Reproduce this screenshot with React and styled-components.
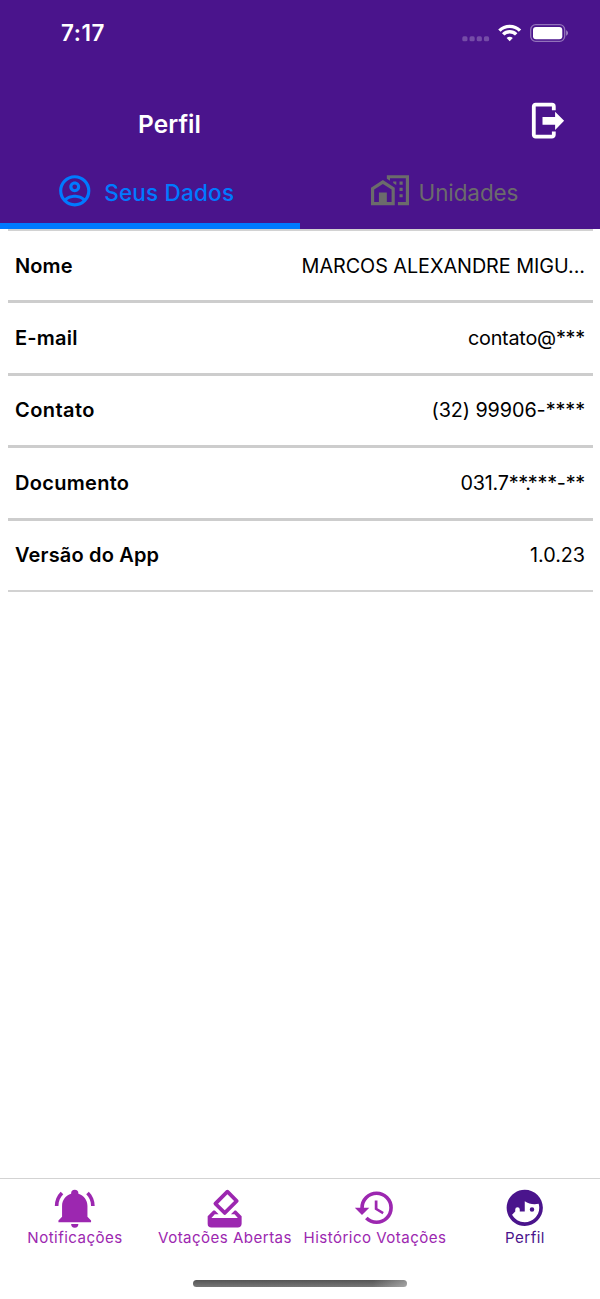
import React, { useState } from "react";
import styled, { createGlobalStyle } from "styled-components";

const GlobalStyle = createGlobalStyle`
  * {
    box-sizing: border-box;
  }

  body {
    margin: 0;
    background-color: #fff;
    font-family: Inter, "Liberation Sans", sans-serif;
  }
`;

const Root = styled.div`
  width: 600px;
  height: 1299px;
  background-color: #fff;
  display: flex;
  flex-direction: column;
  overflow: hidden;
`;

const Header = styled.header`
  height: 229px;
  background-color: #4a148c;
  color: #fff;
  display: flex;
  flex-direction: column;
`;

const StatusBar = styled.div`
  height: 66px;
  padding: 0 32px 0 61px;
  display: flex;
  align-items: center;
  justify-content: space-between;
`;

const Clock = styled.span`
  font-size: 22.4px;
  line-height: 28px;
  padding-bottom: 1px;
  font-weight: 600;
  letter-spacing: 0.6px;
`;

const StatusIcons = styled.div`
  display: flex;
  align-items: center;
`;

const TitleBar = styled.div`
  height: 94px;
  padding: 22px 34.7px 0 138px;
  display: flex;
  align-items: flex-start;
  justify-content: space-between;
`;

const Title = styled.h1`
  margin: 21px 0 0;
  font-size: 24.4px;
  line-height: 30px;
  font-weight: 600;
  letter-spacing: 0.1px;
`;

const LogoutButton = styled.button`
  padding: 0;
  margin-top: 13px;
  border: 0;
  background: none;
  color: #fff;
  cursor: pointer;
  line-height: 0;
`;

const Tabs = styled.div`
  flex: 1;
  display: flex;
`;

const Tab = styled.button`
  width: 300px;
  padding: ${props => props.$pad};
  border: 0;
  border-bottom: 6px solid ${props => (props.$active ? "#007aff" : "transparent")};
  background: none;
  color: ${props => (props.$active ? "#007aff" : "#6b6b6b")};
  display: flex;
  align-items: flex-start;
  gap: ${props => props.$gap};
  font-family: inherit;
  font-size: 22.5px;
  line-height: 30px;
  font-weight: ${props => (props.$active ? 500 : 400)};
  letter-spacing: ${props => props.$spacing};
  cursor: pointer;
  text-align: left;
`;

const TabText = styled.span`
  margin-top: 18px;
`;

const List = styled.div`
  flex: 1;
  padding: 0 7px 0 7.5px;
`;

const Line = styled.div`
  height: ${props => (props.$thin ? "2px" : "3px")};
  background-color: ${props => (props.$thin ? "#d2d2d2" : "#cdcdcd")};
`;

const Row = styled.div`
  height: 69.5px;
  padding: 0 8px 0 7.5px;
  display: flex;
  align-items: center;
  justify-content: space-between;
  color: #000;
  font-size: 19.8px;
  line-height: 24px;

  &:nth-child(2) {
    height: 69px;
  }
`;

const Label = styled.span`
  font-size: 20px;
  font-weight: 600;
  letter-spacing: ${props => props.$spacing};
`;

const Value = styled.span`
  letter-spacing: ${props => props.$spacing};
  font-feature-settings: "calt" 0;
  white-space: nowrap;
`;

// the dot of a masked document sits under the asterisks
const MaskDot = styled.span`
  margin: 0 -2.8px;
`;

const BottomBar = styled.nav`
  height: 121px;
  border-top: 1px solid #d3d3d3;
  display: flex;
  flex-direction: column;
  align-items: center;
`;

const NavItems = styled.div`
  width: 100%;
  height: 101px;
  display: grid;
  grid-template-columns: repeat(4, 150px);
`;

const NavItem = styled.button`
  padding: 6.5px 0 0;
  border: 0;
  background: none;
  color: ${props => (props.$active ? "#4a148c" : "#9c27b0")};
  display: flex;
  flex-direction: column;
  align-items: center;
  font-family: inherit;
  font-size: 15.1px;
  line-height: 18px;
  letter-spacing: 0.45px;
  white-space: nowrap;
  cursor: pointer;
`;

const HomeIndicator = styled.div`
  width: 214px;
  height: 7px;
  border-radius: 4px;
  background:
    linear-gradient(to right, transparent 84%, rgba(255, 255, 255, 0.35)),
    linear-gradient(to bottom, #555, #777);
`;

const paths = {
  account: "M12,2A10,10 0 0,0 2,12A10,10 0 0,0 12,22A10,10 0 0,0 22,12A10,10 0 0,0 12,2M7.07,18.28C7.5,17.38 10.12,16.5 12,16.5C13.88,16.5 16.5,17.38 16.93,18.28C15.57,19.36 13.86,20 12,20C10.14,20 8.43,19.36 7.07,18.28M18.36,16.83C16.93,15.09 13.46,14.5 12,14.5C10.54,14.5 7.07,15.09 5.64,16.83C4.62,15.5 4,13.82 4,12C4,7.59 7.59,4 12,4C16.41,4 20,7.59 20,12C20,13.82 19.38,15.5 18.36,16.83M12,6C10.06,6 8.5,7.56 8.5,9.5C8.5,11.44 10.06,13 12,13C13.94,13 15.5,11.44 15.5,9.5C15.5,7.56 13.94,6 12,6M12,11A1.5,1.5 0 0,1 10.5,9.5A1.5,1.5 0 0,1 12,8A1.5,1.5 0 0,1 13.5,9.5A1.5,1.5 0 0,1 12,11Z",
  homeCity: "M10 2V4.26L12 5.59V4H22V19H17V21H24V2H10M7.5 5L0 10V21H15V10L7.5 5M14 6V6.93L15.61 8H16V6H14M18 6V8H20V6H18M7.5 7.5L13 11V19H10V13H5V19H2V11L7.5 7.5M18 10V12H20V10H18M18 14V16H20V14H18Z",
  bell: "M21,19V20H3V19L5,17V11C5,7.9 7.03,5.17 10,4.29C10,4.19 10,4.1 10,4A2,2 0 0,1 12,2A2,2 0 0,1 14,4C14,4.1 14,4.19 14,4.29C16.97,5.17 19,7.9 19,11V17L21,19M14,21A2,2 0 0,1 12,23A2,2 0 0,1 10,21M19.75,3.19L18.33,4.61C20.04,6.3 21,8.6 21,11H23C23,8.07 21.84,5.25 19.75,3.19M1,11H3C3,8.6 3.96,6.3 5.67,4.61L4.25,3.19C2.16,5.25 1,8.07 1,11Z",
  vote: "M18 13h-.68l-2 2h1.91L19 17H5l1.78-2h2.05l-2-2H6l-3 3v4a2 2 0 0 0 2 2h14c1.11 0 2-.89 2-2v-4l-3-3m-1-5.05l-4.95 4.95-3.54-3.54 4.95-4.95L17 7.95m-4.24-5.66L6.39 8.66a.996.996 0 0 0 0 1.41l4.95 4.95c.39.39 1.02.39 1.41 0l6.36-6.36a.996.996 0 0 0 0-1.41L14.16 2.3a.975.975 0 0 0-1.4-.01z",
  history: "M13.5,8H12V13L16.28,15.54L17,14.33L13.5,12.25V8M13,3A9,9 0 0,0 4,12H1L4.96,16.03L9,12H6A7,7 0 0,1 13,5A7,7 0 0,1 20,12A7,7 0 0,1 13,19C11.07,19 9.32,18.21 8.06,16.94L6.64,18.36C8.27,20 10.5,21 13,21A9,9 0 0,0 22,12A9,9 0 0,0 13,3",
  face: "M12 2C6.5 2 2 6.5 2 12S6.5 22 12 22 22 17.5 22 12 17.5 2 12 2M12 8.39C13.57 9.4 15.42 10 17.42 10C18.2 10 18.95 9.91 19.67 9.74C19.88 10.45 20 11.21 20 12C20 16.41 16.41 20 12 20C9 20 6.39 18.34 5 15.89L6.75 14V13A1.25 1.25 0 0 1 8 11.75A1.25 1.25 0 0 1 9.25 13V14H12M16 11.75A1.25 1.25 0 0 0 14.75 13 1.25 1.25 0 0 0 16 14.25 1.25 1.25 0 0 0 17.25 13 1.25 1.25 0 0 0 16 11.75Z",
};

const IconSvg = styled.svg`
  display: block;
  flex: none;
  width: ${props => props.$size}px;
  height: ${props => props.$size}px;
  margin-top: ${props => props.$top || 0}px;
  margin-bottom: ${props => props.$bottom || 0}px;
`;

const Icon = ({ name, size, top, bottom }) => (
  <IconSvg viewBox="0 0 24 24" $size={size} $top={top} $bottom={bottom} fill="currentColor">
    <path d={paths[name]} />
  </IconSvg>
);

// dots, wifi and battery of the status bar
const StatusSvg = () => (
  <svg width="108" height="20" viewBox="0 0 108 20">
    <g fill="#fff" fillOpacity="0.24">
      <rect x="2.3" y="13.3" width="5.2" height="5" rx="1.6" />
      <rect x="9.5" y="13.3" width="5.2" height="5" rx="1.6" />
      <rect x="16.7" y="13.3" width="5.2" height="5" rx="1.6" />
      <rect x="23.9" y="13.3" width="5.2" height="5" rx="1.6" />
    </g>
    <g fill="none" stroke="#fff" strokeWidth="3.4">
      <path d="M39.4 7.6a14.6 14.6 0 0 1 20.6 0" />
      <path d="M43.2 11.4a9.2 9.2 0 0 1 13 0" />
    </g>
    <path d="M49.7 18.3l-3.1-3.2a4.5 4.5 0 0 1 6.2 0z" fill="#fff" />
    <rect x="70.7" y="1.7" width="34" height="16.6" rx="5" fill="none" stroke="#fff" strokeOpacity="0.4" strokeWidth="1.3" />
    <rect x="73" y="4" width="29.3" height="12.2" rx="3" fill="#fff" />
    <path d="M106.2 7.3v5.4c2.3-1 2.3-4.4 0-5.4z" fill="#fff" fillOpacity="0.5" />
  </svg>
);

const LogoutSvg = () => (
  <svg width="34" height="38" viewBox="0 0 34 38">
    <path
      d="M22.8 9.3V5.4a1.8 1.8 0 0 0-1.8-1.8H4.6a1.8 1.8 0 0 0-1.8 1.8v28.4a1.8 1.8 0 0 0 1.8 1.8H21a1.8 1.8 0 0 0 1.8-1.8V30.4"
      fill="none"
      stroke="currentColor"
      strokeWidth="3.8"
    />
    <path d="M11.5 15.9h12.6v-5.2l9 9.1-9 9.1v-5.2H11.5z" fill="currentColor" />
  </svg>
);

const rows = [
  { label: "Nome", labelSpacing: "0.1px", value: "MARCOS ALEXANDRE MIGU...", spacing: "-0.04px" },
  { label: "E-mail", labelSpacing: "0.2px", value: "contato@***", spacing: "-0.22px" },
  { label: "Contato", labelSpacing: "0.45px", value: "(32) 99906-****", spacing: "-0.07px" },
  { label: "Documento", labelSpacing: "0.3px", value: <>031.7**<MaskDot>.</MaskDot>***-**</>, spacing: "-0.25px" },
  { label: "Versão do App", labelSpacing: "0.17px", value: "1.0.23", spacing: "-0.05px" },
];

const navItems = [
  { label: "Notificações", icon: "bell", size: 43.5 },
  { label: "Votações Abertas", icon: "vote", size: 45.3, bottom: -1.8 },
  { label: "Histórico Votações", icon: "history", size: 43.5 },
  { label: "Perfil", icon: "face", size: 43.5 },
];

const App = () => {
  const [tab, setTab] = useState(0);
  const [page, setPage] = useState(3);

  return (
    <Root>
      <GlobalStyle />
      <Header>
        <StatusBar>
          <Clock>7:17</Clock>
          <StatusIcons>
            <StatusSvg />
          </StatusIcons>
        </StatusBar>
        <TitleBar>
          <Title>Perfil</Title>
          <LogoutButton aria-label="Sair">
            <LogoutSvg />
          </LogoutButton>
        </TitleBar>
        <Tabs>
          <Tab $active={tab === 0} $pad="0 0 0 55.7px" $gap="11px" $spacing="0.2px" onClick={() => setTab(0)}>
            <Icon name="account" size={37.5} top={12} />
            <TabText>Seus Dados</TabText>
          </Tab>
          <Tab $active={tab === 1} $pad="0 0 0 71px" $gap="9.5px" $spacing="-0.1px" onClick={() => setTab(1)}>
            <Icon name="homeCity" size={38} top={12} />
            <TabText>Unidades</TabText>
          </Tab>
        </Tabs>
      </Header>
      <List>
        <Line $thin />
        {rows.map((row, i) => (
          <React.Fragment key={row.label}>
            <Row>
              <Label $spacing={row.labelSpacing}>{row.label}</Label>
              <Value $spacing={row.spacing}>{row.value}</Value>
            </Row>
            <Line $thin={i === rows.length - 1} />
          </React.Fragment>
        ))}
      </List>
      <BottomBar>
        <NavItems>
          {navItems.map((item, i) => (
            <NavItem key={item.label} $active={page === i} onClick={() => setPage(i)}>
              <Icon name={item.icon} size={item.size} bottom={item.bottom} />
              <span>{item.label}</span>
            </NavItem>
          ))}
        </NavItems>
        <HomeIndicator />
      </BottomBar>
    </Root>
  )
};

export default App;
